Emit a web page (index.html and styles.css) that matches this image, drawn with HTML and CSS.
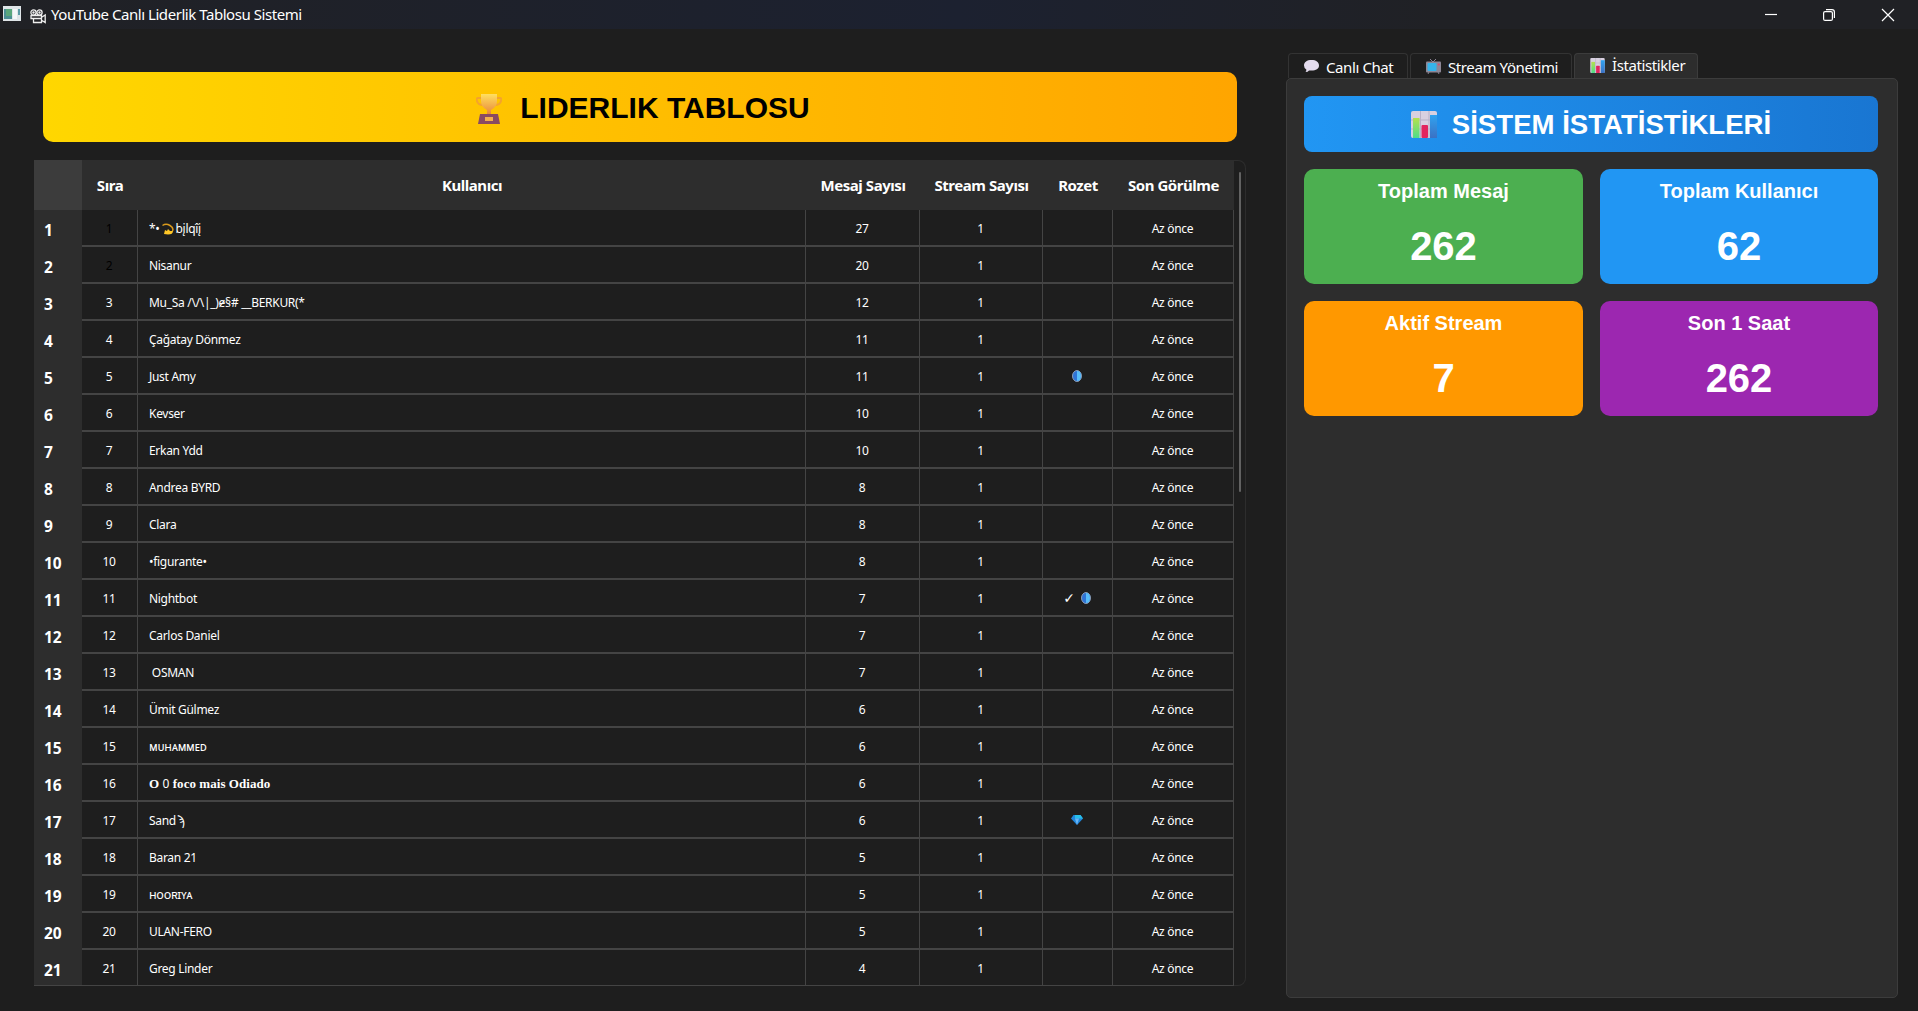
FILE: index.html
```html
<!DOCTYPE html>
<html lang="tr">
    <head>
        <meta charset="UTF-8">
        <title>YouTube Canlı Liderlik Tablosu Sistemi</title>
        <link rel="stylesheet" href="styles.css">
    </head>
    <body>
        <svg class="defs">
            <defs>
                <linearGradient id="gGold" x1="0" y1="0" x2="0" y2="1">
                    <stop offset="0" stop-color="#ffdf60"/><stop offset="1" stop-color="#e8883a"/>
                </linearGradient>
                <linearGradient id="gGreen" x1="0" y1="0" x2="0" y2="1">
                    <stop offset="0" stop-color="#b5e04d"/><stop offset="1" stop-color="#4fdc8b"/>
                </linearGradient>
                <linearGradient id="gBlue" x1="0" y1="0" x2="0" y2="1">
                    <stop offset="0" stop-color="#2fa3f0"/><stop offset="1" stop-color="#3b71c4"/>
                </linearGradient>
                <symbol id="chart" viewBox="0 0 26 27">
                    <rect width="26" height="27" rx="2" fill="#d8d0e0"/>
                    <path d="M0 9H26M0 18H26M9.5 0V27M18 0V27" stroke="#b9b0c6" stroke-width="1"/>
                    <rect x="2" y="7" width="6.5" height="20" fill="url(#gGreen)"/>
                    <rect x="10.500" y="14" width="6.500" height="13" rx="1" fill="#e2245e"/>
                    <rect x="19" y="4" width="7" height="23" fill="url(#gBlue)"/>
                </symbol>
            </defs>
        </svg>

        <div class="titlebar">
            <svg class="app-icon" viewBox="0 0 18 15">
                <rect width="18" height="15" fill="#dfe5e8"/>
                <rect x="1" y="3" width="8" height="10" fill="#4b8f93"/>
                <rect x="3" y="3" width="6" height="7" fill="#5aa77c"/>
                <rect x="10" y="3" width="4" height="10" fill="#f4f7f8"/>
                <rect x="15" y="3" width="2" height="6" fill="#5c9aa5"/>
            </svg>
            <svg class="cam-icon" viewBox="0 0 16 15" fill="none" stroke="#eee" stroke-width="1.300">
                <circle cx="3.500" cy="3.500" r="2.600"/><circle cx="9.500" cy="3.500" r="2.600"/>
                <circle cx="3.500" cy="3.500" r=".6"/><circle cx="9.500" cy="3.500" r=".6"/>
                <path d="M1 6.500H11.500V13.500H3.500V9.500H1Z M4 9.500H11M12 8L15.200 6V13.500L12 11.500"/>
            </svg>
            <span class="title">YouTube Canlı Liderlik Tablosu Sistemi</span>
            <svg class="win-buttons" viewBox="0 0 130 14" fill="none" stroke="#fff" stroke-width="1.200">
                <path d="M0 6.500H12"/>
                <rect x="58.600" y="3.600" width="8.800" height="8.800" rx="1.500"/>
                <path d="M61 1.600H67Q69.400 1.600 69.400 4V10"/>
                <path d="M117 1L129 13M129 1L117 13"/>
            </svg>
        </div>

        <div class="main">
            <div class="left">
                <div class="banner">
                    <svg class="trophy" viewBox="0 0 26 31">
                        <path d="M5 5H2Q0 5 1 8Q2 12 7 12M21 5H24Q26 5 25 8Q24 12 19 12" fill="none" stroke="#f5a32c" stroke-width="2"/>
                        <path d="M5 1H21V8Q21 14 15 17V21H11V17Q5 14 5 8Z" fill="url(#gGold)"/>
                        <path d="M4 21H22L24 31H2Z" fill="#8a4a62"/>
                        <rect x="9" y="24" width="8" height="4" fill="#f3ae4e"/>
                    </svg>
                    <span>LIDERLIK TABLOSU</span>
                </div>
                <div class="frame">
                    <div class="table" id="table">
                        <div class="row head">
                            <div class="no"></div>
                            <div>Sıra</div>
                            <div>Kullanıcı</div>
                            <div>Mesaj Sayısı</div>
                            <div>Stream Sayısı</div>
                            <div>Rozet</div>
                            <div>Son Görülme</div>
                        </div>
                    </div>
                    <div class="scroll"></div>
                </div>
            </div>

            <div class="right">
                <div class="tabs">
                    <div class="tab">
                        <svg width="15" height="13" viewBox="0 0 15 13"><path d="M7.500 0C12 0 15 2 15 5.500S12 10.500 7.500 10.500L5 10.500Q4 12 1.500 12Q2.500 11 2.300 9.500Q0 8 0 5.500C0 2 3 0 7.500 0Z" fill="#e4dcee"/></svg>
                        <span>Canlı Chat</span>
                    </div>
                    <div class="tab">
                        <svg width="15" height="15" viewBox="0 0 15 15"><path d="M4 0L7 3L10 0M3 13L2 15M12 13L13 15" stroke="#8b8394" fill="none"/><rect y="2.500" width="15" height="11" rx="1" fill="#8d8796"/><rect x="1.500" y="4" width="9" height="8" rx="1" fill="#35b4ea"/><circle cx="12.800" cy="5.500" r="1" fill="#d84b6a"/></svg>
                        <span>Stream Yönetimi</span>
                    </div>
                    <div class="tab active">
                        <svg width="15" height="15"><use href="#chart"/></svg>
                        <span>İstatistikler</span>
                    </div>
                </div>
                <div class="panel">
                    <div class="stat-title">
                        <svg width="26" height="27"><use href="#chart"/></svg>
                        <span>SİSTEM İSTATİSTİKLERİ</span>
                    </div>
                    <div class="cards">
                        <div class="card green"><p>Toplam Mesaj</p><b>262</b></div>
                        <div class="card blue"><p>Toplam Kullanıcı</p><b>62</b></div>
                        <div class="card orange"><p>Aktif Stream</p><b>7</b></div>
                        <div class="card purple"><p>Son 1 Saat</p><b>262</b></div>
                    </div>
                </div>
            </div>
        </div>
        <script type="text/javascript">
            var dizzy = '<svg class="dizzy" viewBox="0 0 12 12"><path d="M.5 2.500Q4 0 8 2.500T10.500 8" fill="none" stroke="#d99a1c" stroke-width="1.500"/><path d="M3 7L5 8L6 6L8 8L11 8Q11 11.500 6 11.500L2 11Z" fill="#ffc727"/></svg>';
            var moon = '<svg class="moon" viewBox="0 0 10 12"><ellipse cx="5" cy="6" rx="4.500" ry="5.500" fill="#2f74d6" stroke="#8a9cb5"/><path d="M5 1Q9 1 9 6T5 11Z" fill="#58bdf8"/></svg>';
            var gem = '<svg class="gem" viewBox="0 0 12 10"><path d="M2.500 0H9.500L12 3.500L6 10L0 3.500Z" fill="#2086dc"/><path d="M4 0H9.500L12 3.500H4Z" fill="#27bfe8"/><path d="M4 3.500H8L6 10Z" fill="#6ab5f5"/></svg>';

            // name, messages, badge
            var users = [
                ['*•' + dizzy + 'bįlqîį', 27, ''],
                ['Nisanur', 20, ''],
                ['Mu_Sa /\\/\\|_)ɇ§# __BERKUR(*', 12, ''],
                ['Çağatay Dönmez', 11, ''],
                ['Just Amy', 11, moon],
                ['Kevser', 10, ''],
                ['Erkan Ydd', 10, ''],
                ['Andrea BYRD', 8, ''],
                ['Clara', 8, ''],
                ['•figurante•', 8, ''],
                ['Nightbot', 7, '<span class="check">✓</span>' + moon],
                ['Carlos Daniel', 7, ''],
                ['&nbsp;OSMAN', 7, ''],
                ['Ümit Gülmez', 6, ''],
                ['ᴍᴜʜᴀᴍᴍᴇᴅ', 6, ''],
                ['<span class="serif"><b>O</b> <i>0</i> <b>foco mais Odiado</b></span>', 6, ''],
                ['Sand ϡ', 6, gem],
                ['Baran 21', 5, ''],
                ['ʜᴏᴏʀɪʏᴀ', 5, ''],
                ['ULAN-FERO', 5, ''],
                ['Greg Linder', 4, '']
            ];
            var html = '';
            for (var i = 0; i < users.length; i++) {
                html += '<div class="row"><div class="no">' + (i + 1) + '</div>' +
                    '<div' + (i < 2 ? ' class="dark"' : '') + '>' + (i + 1) + '</div>' +
                    '<div class="name"><span>' + users[i][0] + '</span></div>' +
                    '<div>' + users[i][1] + '</div><div>1</div>' +
                    '<div>' + users[i][2] + '</div><div>Az önce</div></div>';
            }
            document.getElementById('table').innerHTML += html;
        </script>
    </body>
</html>
```

FILE: styles.css
```css
*{
    margin: 0;
    padding: 0;
    box-sizing: border-box;
}
body{
    width: 100%;
    height: 1011px;
    overflow: hidden;
    background: #1e1e1e;
    color: #fff;
    font-family: "Noto Sans", "DejaVu Sans", sans-serif;
}
svg{
    display: block;
    flex: none;
}
.defs{
    width: 0;
    height: 0;
    position: absolute;
}
.titlebar{
    display: flex;
    align-items: center;
    height: 29px;
    padding: 0 23px 0 3px;
    background: linear-gradient(90deg, #202125, #1c2130 50%, #202125 75%);
}
.app-icon{
    width: 18px;
    height: 15px;
    margin: 0 9px 2px 0;
}
.cam-icon{
    width: 16px;
    height: 15px;
    margin: 3px 5px 0 0;
}
.title{
    font-size: 15px;
    letter-spacing: -.45px;
    padding-bottom: 2px;
}
.win-buttons{
    width: 130px;
    height: 14px;
    margin-left: auto;
}
.main{
    display: flex;
    justify-content: space-between;
    padding: 24px 20px 0 34px;
}
.left{
    width: 1212px;
    padding-top: 19px;
}
.banner{
    display: flex;
    align-items: center;
    justify-content: center;
    width: 1194px;
    height: 70px;
    margin: 0 0 18px 9px;
    padding: 2px 0 0 6px;
    border-radius: 10px;
    background: linear-gradient(90deg, #ffd700, #ffa500);
    color: #000;
    font: bold 30px "Liberation Sans", sans-serif;
}
.trophy{
    width: 26px;
    height: 31px;
    margin-right: 18px;
}
.frame{
    display: flex;
    height: 826px;
    border: solid #2d2d2d;
    border-width: 1px 1px 1px 0;
    border-radius: 8px;
}
.table{
    width: 1200px;
    height: 826px;
    margin-top: -1px;
    overflow: hidden;
    flex: none;
    border-bottom: 1px solid #444;
}
.row{
    display: grid;
    grid-template-columns: 48px 56px 668px 114px 123px 70px 121px;
    height: 37px;
    font-size: 12px;
    letter-spacing: -.3px;
}
.row > div{
    display: flex;
    align-items: center;
    justify-content: center;
    padding: 1px 1px 0 0;
    border-right: 1px solid #444;
    border-bottom: 2px solid #444;
    white-space: pre;
}
.row > .no{
    justify-content: flex-start;
    padding: 2px 0 0 10px;
    border: 0;
    background: #2d2d2d;
    font-size: 15.5px;
    font-weight: bold;
    letter-spacing: 0;
}
.row > .name{
    justify-content: flex-start;
    padding-left: 11px;
}
.row > .dark{
    color: #000;
}
.head{
    height: 50px;
    background: #2d2d2d;
    font-size: 15px;
    font-weight: bold;
    letter-spacing: -.45px;
}
.head > div{
    border: 0;
    padding: 0;
}
.head > .no{
    background: #3c3c3c;
}
.scroll{
    width: 2px;
    height: 320px;
    margin: 11px 0 0 5px;
    border-radius: 1px;
    background: #626262;
}
.dizzy{
    display: inline-block;
    width: 12px;
    height: 12px;
    margin: 0 2px -2px 2px;
}
.moon{
    width: 10px;
    height: 12px;
}
.gem{
    width: 12px;
    height: 10px;
}
.check{
    margin-right: 6px;
    font-family: "DejaVu Sans", sans-serif;
    font-size: 14px;
}
.serif{
    font-family: "Liberation Serif", serif;
    font-size: 13px;
    letter-spacing: .05px;
}
.serif i{
    font-family: "Noto Sans", sans-serif;
    font-size: 12px;
    font-style: normal;
}
.right{
    width: 612px;
}
.tabs{
    display: flex;
    gap: 2px;
    height: 25px;
    padding-left: 2px;
    align-items: stretch;
}
.tab{
    display: flex;
    align-items: center;
    gap: 7px;
    width: 120px;
    padding: 1px 0 0 15px;
    border: 1px solid #333;
    border-bottom: 0;
    border-radius: 4px 4px 0 0;
    font-size: 15px;
    letter-spacing: -.4px;
    white-space: nowrap;
}
.tab:nth-child(2){
    width: 162px;
}
.tab.active{
    width: 124px;
    padding: 0 0 2px 15px;
    background: #2d2d2d;
    border-color: #3c3c3c;
}
.panel{
    height: 920px;
    padding: 17px;
    border: 1px solid #3c3c3c;
    border-radius: 5px;
    background: #2d2d2d;
}
.stat-title{
    display: flex;
    align-items: center;
    justify-content: center;
    gap: 15px;
    width: 574px;
    height: 56px;
    margin-bottom: 17px;
    padding-top: 1px;
    border-radius: 8px;
    background: linear-gradient(90deg, #2196f3, #1976d2);
    font: bold 27.6px "Liberation Sans", sans-serif;
}
.cards{
    display: grid;
    grid-template-columns: 279px 278px;
    gap: 17px;
}
.card{
    height: 115px;
    padding-top: 11px;
    border-radius: 10px;
    text-align: center;
    font-family: "Liberation Sans", sans-serif;
}
.card p{
    font-size: 20px;
    font-weight: bold;
    line-height: 23px;
}
.card b{
    display: block;
    margin-top: 20px;
    font-size: 40px;
    line-height: 46px;
}
.green{ background: #4caf50; }
.blue{ background: #2196f3; }
.orange{ background: #ff9800; }
.purple{ background: #9c27b0; }
```
